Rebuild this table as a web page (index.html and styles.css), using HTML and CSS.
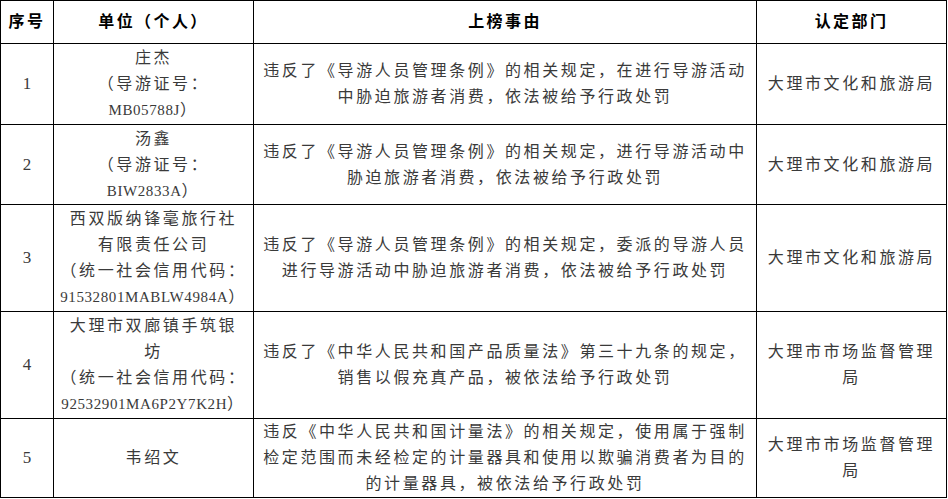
FILE: index.html
```html
<!DOCTYPE html>
<html lang="zh-CN">
<head>
<meta charset="utf-8">
<title>上榜名单</title>
<link rel="stylesheet" href="styles.css">
</head>
<body>
<table class="list">
  <colgroup>
    <col class="c-no">
    <col class="c-unit">
    <col class="c-reason">
    <col class="c-dept">
  </colgroup>
  <thead>
    <tr class="r-head">
      <th>序号</th>
      <th>单位（个人）</th>
      <th>上榜事由</th>
      <th>认定部门</th>
    </tr>
  </thead>
  <tbody>
    <tr class="r1">
      <td class="no">1</td>
      <td>庄杰<br>（导游证号：<br><span class="code">MB05788J</span>）</td>
      <td>违反了《导游人员管理条例》的相关规定，在进行导游活动<br>中胁迫旅游者消费，依法被给予行政处罚</td>
      <td>大理市文化和旅游局</td>
    </tr>
    <tr class="r2">
      <td class="no">2</td>
      <td>汤鑫<br>（导游证号：<br><span class="code">BIW2833A</span>）</td>
      <td>违反了《导游人员管理条例》的相关规定，进行导游活动中<br>胁迫旅游者消费，依法被给予行政处罚</td>
      <td>大理市文化和旅游局</td>
    </tr>
    <tr class="r3">
      <td class="no">3</td>
      <td>西双版纳锋毫旅行社<br>有限责任公司<br>（统一社会信用代码：<br><span class="code">91532801MABLW4984A</span>）</td>
      <td>违反了《导游人员管理条例》的相关规定，委派的导游人员<br>进行导游活动中胁迫旅游者消费，依法被给予行政处罚</td>
      <td>大理市文化和旅游局</td>
    </tr>
    <tr class="r4">
      <td class="no">4</td>
      <td>大理市双廊镇手筑银<br>坊<br>（统一社会信用代码：<br><span class="code">92532901MA6P2Y7K2H</span>）</td>
      <td>违反了《中华人民共和国产品质量法》第三十九条的规定，<br>销售以假充真产品，被依法给予行政处罚</td>
      <td>大理市市场监督管理<br>局</td>
    </tr>
    <tr class="r5">
      <td class="no">5</td>
      <td>韦绍文</td>
      <td>违反《中华人民共和国计量法》的相关规定，使用属于强制<br>检定范围而未经检定的计量器具和使用以欺骗消费者为目的<br>的计量器具，被依法给予行政处罚</td>
      <td>大理市市场监督管理<br>局</td>
    </tr>
  </tbody>
</table>
</body>
</html>
```

FILE: styles.css
```css
html, body {
  margin: 0;
  padding: 0;
  background: #ffffff;
}

.list {
  border-collapse: collapse;
  table-layout: fixed;
  width: 946px;
  font-family: "Liberation Serif", "Noto Sans CJK SC", serif;
  font-size: 16px;
  color: #3a3a3a;
}

.c-no { width: 53px; }
.c-unit { width: 200px; }
.c-reason { width: 503px; }
.c-dept { width: 190px; }

.list th,
.list td {
  border: 1px solid #000;
  padding: 0 4px;
  text-align: center;
  vertical-align: middle;
  line-height: 26px;
  letter-spacing: 2.6px;
  white-space: nowrap;
  font-weight: normal;
}

.list th {
  font-weight: bold;
  color: #000;
  letter-spacing: 2.4px;
  font-size: 16px;
}

.list td.no {
  letter-spacing: 0;
  padding: 0;
  font-size: 17px;
}

.code {
  font-size: 15px;
  letter-spacing: 0.6px;
}

.r-head { height: 43px; }
.r1 { height: 81px; }
.r2 { height: 80px; }
.r3 { height: 107px; }
.r4 { height: 107px; }
.r5 { height: 79px; }
```
